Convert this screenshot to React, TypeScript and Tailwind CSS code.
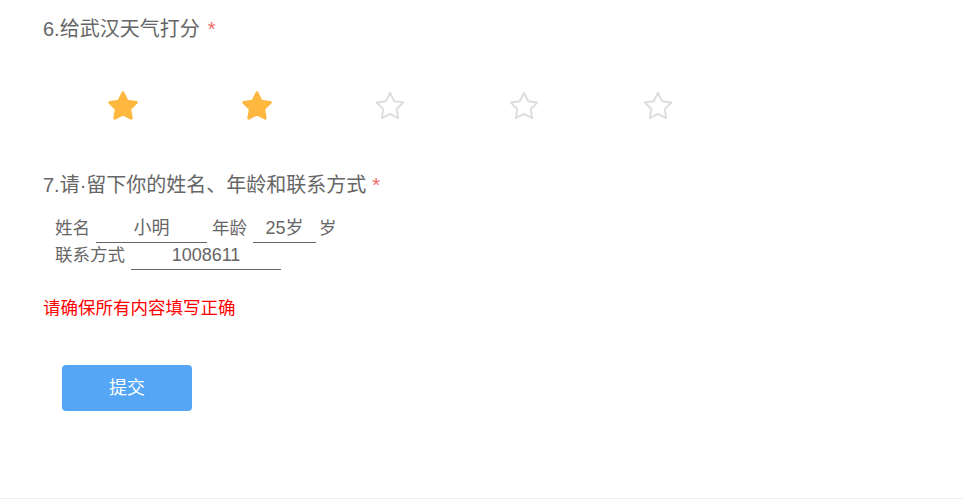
import React from 'react';

const Star: React.FC<{ filled: boolean }> = ({ filled }) => (
  <svg width="32" height="32" viewBox="0 0 32 32">
    <polygon
      points="16,2.8 20.12,11.14 29.31,12.47 22.66,18.96 24.23,28.13 16,23.8 7.77,28.13 9.34,18.96 2.69,12.47 11.88,11.14"
      fill={filled ? '#ffb83f' : 'none'}
      stroke={filled ? '#ffb83f' : '#dcdee0'}
      strokeWidth={filled ? 3 : 2}
      strokeLinejoin="round"
    />
  </svg>
);

const Field: React.FC<{ value: string; className: string }> = ({ value, className }) => (
  <span className={`h-[26px] border-b border-[#666] text-center text-[18px] leading-[23px] ${className}`}>
    {value}
  </span>
);

export default function App() {
  const score = 2;

  return (
    <div
      className="h-[499px] border-b border-[#ebedf0] bg-white pt-[15px] text-[#666]"
      style={{ fontFamily: '"Liberation Sans", "Noto Sans CJK SC", sans-serif' }}
    >
      <h3 className="pl-[43px] text-[20px] leading-[28px] font-normal">
        6.给武汉天气打分<span className="ml-[8px] text-[#f46b6b]">*</span>
      </h3>

      <div className="mt-[47px] ml-[56px] grid w-[669px] grid-cols-5">
        {[1, 2, 3, 4, 5].map((n) => (
          <div key={n} className="flex justify-center">
            <Star filled={n <= score} />
          </div>
        ))}
      </div>

      <h3 className="mt-[49px] pl-[43px] text-[20px] leading-[28px] font-normal">
        7.请·留下你的姓名、年龄和联系方式<span className="ml-[6px] text-[#f46b6b]">*</span>
      </h3>

      <div className="mt-[18px] pl-[55px] text-[17.5px]">
        <div className="flex items-end">
          <span className="h-[26px] leading-[23px]">姓名</span>
          <Field value="小明" className="ml-[6px] w-[111px]" />
          <span className="ml-[5px] h-[26px] leading-[23px]">年龄</span>
          <Field value="25岁" className="ml-[6px] w-[63px]" />
          <span className="ml-[3px] h-[26px] leading-[23px]">岁</span>
        </div>
        <div className="mt-px flex items-end">
          <span className="h-[26px] leading-[23px]">联系方式</span>
          <Field value="1008611" className="ml-[6px] w-[150px]" />
        </div>
      </div>

      <p className="mt-[26px] pl-[43px] text-[17.5px] leading-[24px] text-[#ff0000]">请确保所有内容填写正确</p>

      <button className="mt-[45px] ml-[62px] flex h-[46px] w-[130px] items-center justify-center rounded-[4px] bg-[#56a6f6] text-[18px] text-white">
        提交
      </button>
    </div>
  );
}
